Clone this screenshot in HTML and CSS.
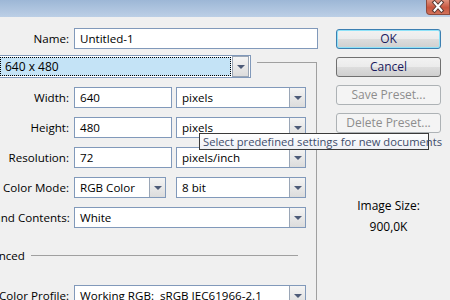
FILE: index.html
```html
<!DOCTYPE html>
<html lang="en">

<head>
    <meta charset="UTF-8">
    <title>New</title>
    <link rel="stylesheet" href="styles.css">
</head>

<body>
    <div class="titlebar">
        <div class="close">
            <svg width="24" height="15" viewBox="0 0 24 15">
                <path d="M8.5 3.5 L15.5 11.5 M15.5 3.5 L8.5 11.5" stroke="#5a3a34" stroke-width="4" stroke-linecap="square"/>
                <path d="M8.5 3.5 L15.5 11.5 M15.5 3.5 L8.5 11.5" stroke="#fff" stroke-width="2" stroke-linecap="square"/>
            </svg>
        </div>
    </div>

    <div class="dialog">
        <div class="main">
            <div class="row name-row">
                <span class="label">Name:</span>
                <div class="field wide">Untitled-1</div>
            </div>

            <div class="group">
                <div class="preset-wrap">
                    <div class="combo preset">
                        <div class="combo-value">640 x 480</div>
                        <div class="arrow"></div>
                    </div>
                </div>

                <div class="row">
                    <span class="label">Width:</span>
                    <div class="field num">640</div>
                    <div class="combo unit">
                        <div class="combo-value">pixels</div>
                        <div class="arrow"></div>
                    </div>
                </div>
                <div class="row">
                    <span class="label">Height:</span>
                    <div class="field num">480</div>
                    <div class="combo unit">
                        <div class="combo-value">pixels</div>
                        <div class="arrow"></div>
                    </div>
                </div>
                <div class="row">
                    <span class="label">Resolution:</span>
                    <div class="field num">72</div>
                    <div class="combo unit">
                        <div class="combo-value">pixels/inch</div>
                        <div class="arrow"></div>
                    </div>
                </div>
                <div class="row">
                    <span class="label">Color Mode:</span>
                    <div class="combo mode">
                        <div class="combo-value">RGB Color</div>
                        <div class="arrow"></div>
                    </div>
                    <div class="combo unit">
                        <div class="combo-value">8 bit</div>
                        <div class="arrow"></div>
                    </div>
                </div>
                <div class="row">
                    <span class="label">Background Contents:</span>
                    <div class="combo full">
                        <div class="combo-value">White</div>
                        <div class="arrow"></div>
                    </div>
                </div>

                <div class="advanced">
                    <span>Advanced</span>
                    <div class="rule"></div>
                </div>

                <div class="row profile-row">
                    <span class="label">Color Profile:</span>
                    <div class="combo full">
                        <div class="combo-value">Working RGB:&nbsp; sRGB IEC61966-2.1</div>
                        <div class="arrow"></div>
                    </div>
                </div>
            </div>
        </div>

        <div class="side">
            <div class="btn default">OK</div>
            <div class="btn">Cancel</div>
            <div class="btn disabled">Save Preset...</div>
            <div class="btn disabled">Delete Preset...</div>

            <div class="size-title">Image Size:</div>
            <div class="size-value">900,0K</div>
        </div>
    </div>

    <div class="tooltip">Select predefined settings for new documents</div>
</body>

</html>
```

FILE: styles.css
```css
* {
    box-sizing: border-box;
}

body {
    margin: 0;
    width: 450px;
    height: 300px;
    overflow: hidden;
    position: relative;
    background-color: #f0f0f0;
    font-family: 'Open Sans', 'Liberation Sans', sans-serif;
    font-size: 11.6px;
    color: #000;
}

.titlebar {
    height: 17px;
    background: linear-gradient(#9db7d6, #bccfe6);
    display: flex;
    justify-content: flex-end;
}

.close {
    width: 24px;
    height: 15px;
    border: 1px solid #8d4a3c;
    border-top: none;
    border-radius: 0 0 0 4px;
    background: linear-gradient(#e0937f, #c8553e 55%, #d2735c);
    overflow: hidden;
}

.close svg {
    display: block;
    margin: -1px 0 0 -1px;
}

.dialog {
    display: flex;
}

.main {
    margin-left: -60px;
    width: 378px;
}

.row {
    display: flex;
    align-items: center;
    height: 21px;
    margin-top: 9px;
}

.label {
    width: 119px;
    margin-right: 5px;
    text-align: right;
    white-space: nowrap;
}

.name-row {
    margin-top: 11px;
}

.name-row .label {
    width: 129px;
}

.field {
    height: 21px;
    border: 1px solid #8199ba;
    background-color: #fff;
    padding-left: 5px;
    line-height: 19px;
    white-space: nowrap;
}

.field.wide {
    width: 244px;
}

.field.num {
    width: 98px;
}

.group {
    margin-top: 13px;
    margin-left: 10px;
    width: 367px;
    height: 260px;
    border-top: 1px solid #a0a0a0;
    border-right: 1px solid #a0a0a0;
}

.preset-wrap {
    margin-top: -8px;
    width: 307px;
    padding-left: 48px;
    padding-right: 6px;
    background-color: #f0f0f0;
}

.combo {
    display: flex;
    height: 21px;
    border: 1px solid #8199ba;
    background-color: #fff;
    padding: 1px 0 1px 1px;
    white-space: nowrap;
}

.combo-value {
    flex: 1;
    padding-left: 4px;
    line-height: 17px;
    overflow: hidden;
}

.arrow {
    width: 16px;
    margin: -1px 0;
    border-left: 1px solid #9aa6b6;
    background: linear-gradient(#f4f4f4, #dcdcdc);
    display: flex;
    align-items: center;
    justify-content: center;
}

.arrow::after {
    content: "";
    border-left: 4px solid transparent;
    border-right: 4px solid transparent;
    border-top: 4px solid #4d5b78;
}

.combo.preset {
    height: 23px;
    width: 253px;
    padding: 1px;
}

.combo.preset .combo-value {
    background-color: #c4e3f6;
    border: 1px dotted #000;
    padding-left: 4px;
    line-height: 17px;
    margin-right: 1px;
    font-size: 12px;
}

.combo.preset .arrow {
    width: 17px;
    border: 1px solid #9aa6b6;
}

.combo.unit {
    width: 130px;
    margin-left: 4px;
}

.combo.mode {
    width: 92px;
}

.combo.mode + .combo.unit {
    margin-left: 10px;
}

.combo.full {
    width: 232px;
}

.advanced {
    display: flex;
    align-items: center;
    height: 16px;
    margin-top: 19px;
    padding-left: 22px;
}

.advanced .rule {
    flex: 1;
    margin-left: 6px;
    margin-right: 18px;
    border-top: 1px solid #a0a0a0;
}

.profile-row {
    margin-top: 22px;
}

.side {
    margin-left: 18px;
    width: 105px;
    padding-top: 12px;
    display: flex;
    flex-direction: column;
    align-items: center;
}

.btn {
    width: 105px;
    height: 20px;
    margin-bottom: 8px;
    border: 1px solid #707070;
    border-radius: 3px;
    background: linear-gradient(#f2f2f2, #ebebeb 50%, #dddddd 51%, #cfcfcf);
    color: #1a1a5e;
    text-align: center;
    line-height: 18px;
    font-size: 12px;
}

.btn.default {
    border-color: #3c7fb1;
    box-shadow: inset 0 0 0 1px #8ee2f8;
}

.btn.disabled {
    border-color: #adb2b5;
    background: #f4f4f4;
    color: #8d8d8d;
}

.size-title {
    margin-top: 56px;
    font-size: 12px;
}

.size-value {
    margin-top: 4px;
    font-size: 12px;
}

.tooltip {
    position: absolute;
    left: 199px;
    top: 133px;
    width: 230px;
    height: 17px;
    border: 1px solid #3a3a3a;
    background: linear-gradient(#ffffff, #eef0f5);
    color: #3d4c6b;
    padding-left: 3px;
    line-height: 15px;
    font-size: 11.2px;
    white-space: nowrap;
}
```
